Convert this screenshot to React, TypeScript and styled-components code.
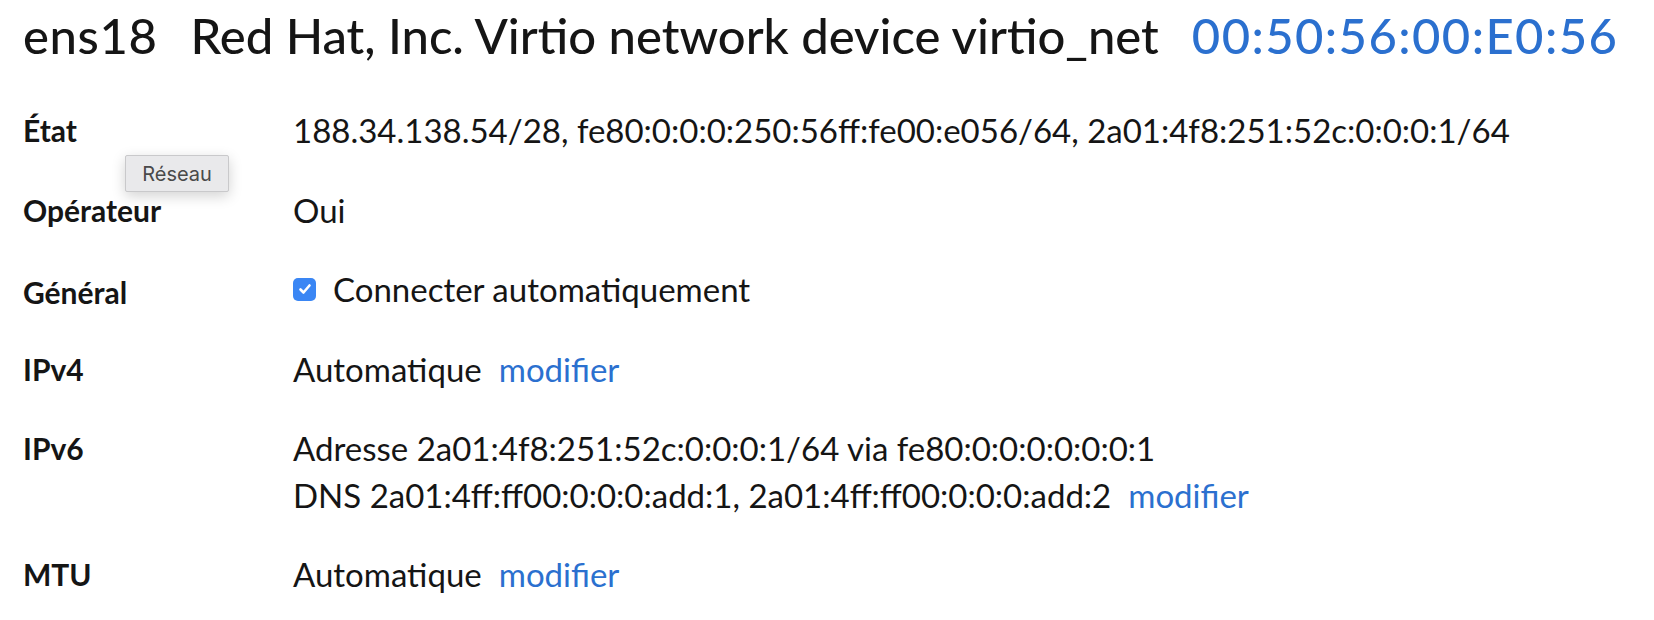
import React from "react";
import styled, { createGlobalStyle } from "styled-components";

const GlobalStyle = createGlobalStyle`
  html, body { margin: 0; padding: 0; background: #ffffff; }
  body { font-family: Lato, "Open Sans", sans-serif; color: #151515; }
`;

const Page = styled.div`
  position: relative;
  padding: 5px 0 0 23px;
  width: 1654px;
  height: 620px;
  box-sizing: border-box;
  overflow: hidden;
`;

const TitleBar = styled.h1`
  display: flex;
  align-items: baseline;
  gap: 33px;
  margin: 0;
  font-family: Lato, sans-serif;
  font-size: 49px;
  font-weight: 500;
  line-height: 60px;
  color: #151515;
  white-space: nowrap;
`;

const DeviceName = styled.span<{ $wide?: boolean }>`
  letter-spacing: ${(p) => (p.$wide ? "0.6px" : "0")};
`;

const Mac = styled.span`
  color: #2b70cf;
  letter-spacing: 1.4px;
`;

const Details = styled.dl`
  display: grid;
  grid-template-columns: 270px 1fr;
  row-gap: 33px;
  margin: 42px 0 0 0;
`;

const Term = styled.dt<{ $shift?: number }>`
  margin: 0;
  font-family: Lato, sans-serif;
  font-size: 30px;
  font-weight: 700;
  line-height: ${(p) => 46.5 - (p.$shift ?? 0)}px;
  padding-top: ${(p) => p.$shift ?? 0}px;
`;

const Value = styled.dd`
  margin: 0;
  font-family: Lato, sans-serif;
  font-size: 33px;
  font-weight: 400;
  line-height: 46.5px;
  color: #151515;
  white-space: nowrap;
`;

const Line = styled.div`
  display: flex;
  align-items: center;
  gap: 17px;
`;

const Link = styled.a`
  color: #2b70cf;
  text-decoration: none;
  cursor: pointer;
`;

const Check = styled.span`
  display: inline-flex;
  align-items: center;
  justify-content: center;
  width: 23px;
  height: 23px;
  border-radius: 5px;
  background: #3a86f4;
  flex: none;
`;

const Tooltip = styled.div`
  position: absolute;
  left: 125px;
  top: 155px;
  width: 104px;
  height: 37px;
  box-sizing: border-box;
  display: flex;
  align-items: center;
  justify-content: center;
  background: #e9e9eb;
  border: 1px solid #c9c9cb;
  border-radius: 2px;
  box-shadow: 0 4px 14px rgba(0, 0, 0, 0.18);
  font-family: Inter, "Noto Sans", sans-serif;
  font-size: 20px;
  color: #4a4a4a;
`;

export default function App() {
  return (
    <>
      <GlobalStyle />
      <Page>
        <TitleBar>
          <DeviceName $wide>ens18</DeviceName>
          <DeviceName>Red Hat, Inc. Virtio network device virtio_net</DeviceName>
          <Mac>00:50:56:00:E0:56</Mac>
        </TitleBar>
        <Details>
          <Term>État</Term>
          <Value>188.34.138.54/28, fe80:0:0:0:250:56ff:fe00:e056/64, 2a01:4f8:251:52c:0:0:0:1/64</Value>

          <Term>Opérateur</Term>
          <Value>Oui</Value>

          <Term $shift={6}>Général</Term>
          <Value>
            <Line>
              <Check>
                <svg width="16" height="16" viewBox="0 0 16 16" fill="none">
                  <path d="M3.5 8.5 L6.5 11.5 L12.5 4.5" stroke="#fff" strokeWidth="2.6" strokeLinecap="round" strokeLinejoin="round" />
                </svg>
              </Check>
              <span>Connecter automatiquement</span>
            </Line>
          </Value>

          <Term>IPv4</Term>
          <Value>
            <Line>
              <span>Automatique</span>
              <Link>modifier</Link>
            </Line>
          </Value>

          <Term>IPv6</Term>
          <Value>
            <div>Adresse 2a01:4f8:251:52c:0:0:0:1/64 via fe80:0:0:0:0:0:0:1</div>
            <Line>
              <span>DNS 2a01:4ff:ff00:0:0:0:add:1, 2a01:4ff:ff00:0:0:0:add:2</span>
              <Link>modifier</Link>
            </Line>
          </Value>

          <Term>MTU</Term>
          <Value>
            <Line>
              <span>Automatique</span>
              <Link>modifier</Link>
            </Line>
          </Value>
        </Details>
        <Tooltip>Réseau</Tooltip>
      </Page>
    </>
  );
}
